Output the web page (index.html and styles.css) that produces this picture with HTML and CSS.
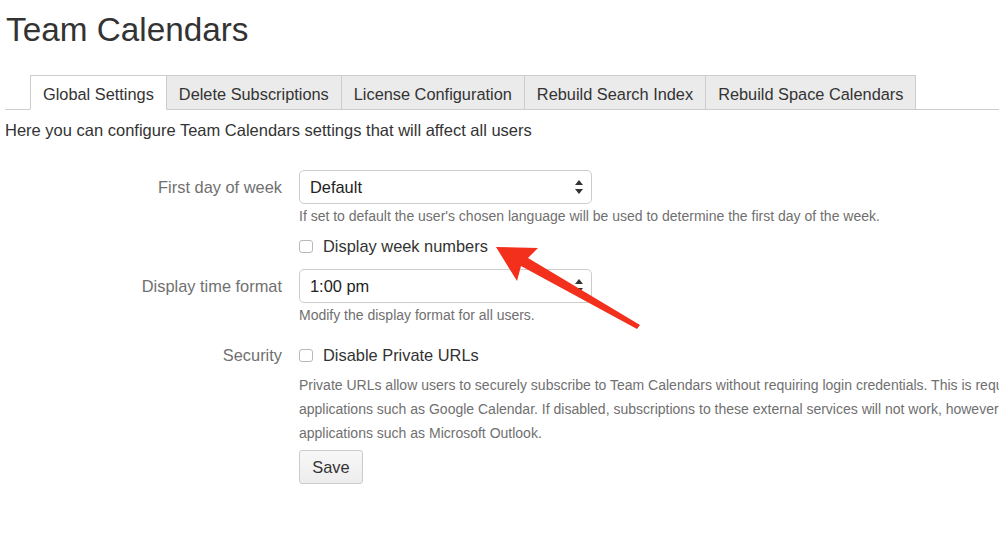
FILE: index.html
```html
<!DOCTYPE html>
<html>
<head>
<meta charset="utf-8">
<link rel="stylesheet" href="styles.css">
</head>
<body>
<div class="page">
  <h1 class="title">Team Calendars</h1>
  <ul class="tabs">
    <li class="tab active">Global Settings</li>
    <li class="tab">Delete Subscriptions</li>
    <li class="tab">License Configuration</li>
    <li class="tab">Rebuild Search Index</li>
    <li class="tab">Rebuild Space Calendars</li>
  </ul>
  <p class="intro">Here you can configure Team Calendars settings that will affect all users</p>

  <form class="form">
    <div class="field">
      <label class="label">First day of week</label>
      <div class="control">
        <div class="select"><span>Default</span><span class="arrows"></span></div>
        <div class="help">If set to default the user's chosen language will be used to determine the first day of the week.</div>
        <div class="check check-sub"><span class="box"></span><span>Display week numbers</span></div>
      </div>
    </div>

    <div class="field field-time">
      <label class="label">Display time format</label>
      <div class="control">
        <div class="select"><span>1:00 pm</span><span class="arrows"></span></div>
        <div class="help">Modify the display format for all users.</div>
      </div>
    </div>

    <div class="field field-security">
      <label class="label label-plain">Security</label>
      <div class="control">
        <div class="check"><span class="box"></span><span>Disable Private URLs</span></div>
        <div class="help help-long">Private URLs allow users to securely subscribe to Team Calendars without requiring login credentials. This is required for subscribing to calendars from external<br>applications such as Google Calendar. If disabled, subscriptions to these external services will not work, however subscriptions will still work in desktop<br>applications such as Microsoft Outlook.</div>
        <div class="buttons"><span class="button">Save</span></div>
      </div>
    </div>
  </form>

  <svg class="arrow" width="999" height="534" viewBox="0 0 999 534">
    <polygon points="496,247 538,248 528,258 640,325 637,329 521,266 517,281" fill="#f2301c"/>
  </svg>
</div>
</body>
</html>
```
FILE: styles.css
```css
html, body {
  margin: 0;
  padding: 0;
  overflow: hidden;
  background: #fff;
}
body {
  font-family: "Liberation Sans", Arial, sans-serif;
  color: #333;
  width: 999px;
  height: 534px;
}
.page {
  position: relative;
  height: 534px;
  padding-left: 5px;
  overflow: hidden;
}
.title {
  margin: 0;
  padding-top: 10px;
  padding-left: 1px;
  font-size: 33.3px;
  line-height: 40px;
  font-weight: normal;
  color: #333;
}
.tabs {
  list-style: none;
  margin: 25px 0 0 0;
  padding: 0 0 0 25px;
  display: flex;
  border-bottom: 1px solid #ccc;
  height: 34px;
}
.tab {
  box-sizing: border-box;
  height: 35px;
  padding: 8px 12px 6px 12px;
  font-size: 16.35px;
  line-height: 20px;
  background: #ebebeb;
  border: 1px solid #ccc;
  border-left: none;
  color: #333;
  white-space: nowrap;
}
.tab:first-child {
  border-left: 1px solid #ccc;
}
.tab.active {
  background: #fff;
  border-bottom-color: #fff;
}
.intro {
  margin: 10px 0 0 0;
  font-size: 16.5px;
  line-height: 20px;
  color: #333;
}
.form {
  margin-top: 30px;
}
.field {
  display: grid;
  grid-template-columns: 277px 1fr;
  column-gap: 17px;
}
.label {
  text-align: right;
  font-size: 16.4px;
  line-height: 34px;
  color: #707070;
}
.control {
  display: flex;
  flex-direction: column;
  align-items: flex-start;
  min-width: 0;
}
.select {
  box-sizing: border-box;
  width: 293px;
  height: 34px;
  border: 1px solid #ccc;
  border-radius: 5px;
  display: flex;
  align-items: center;
  justify-content: space-between;
  padding: 0 8px 0 10px;
  font-size: 16.4px;
  color: #222;
  background: #fff;
}
.arrows {
  width: 8px;
  height: 14px;
  position: relative;
}
.arrows::before, .arrows::after {
  content: "";
  position: absolute;
  left: 0;
  border-left: 4px solid transparent;
  border-right: 4px solid transparent;
}
.arrows::before {
  top: 0;
  border-bottom: 5px solid #333;
}
.arrows::after {
  bottom: 0;
  border-top: 5px solid #333;
}
.help {
  margin-top: 2px;
  font-size: 14px;
  line-height: 20px;
  color: #707070;
  white-space: nowrap;
}
.help-long {
  margin-top: 8px;
  line-height: 24px;
}
.check {
  display: flex;
  align-items: center;
  font-size: 16.4px;
  line-height: 20px;
  color: #333;
}
.check-sub {
  margin-top: 10px;
}
.box {
  box-sizing: border-box;
  width: 14px;
  height: 13px;
  border: 1px solid #b8b8b8;
  border-radius: 3px;
  background: #fff;
  margin-right: 10px;
}
.field-time {
  margin-top: 13px;
}
.field-security {
  margin-top: 20px;
}
.label-plain {
  line-height: 20px;
}
.buttons {
  margin-top: 5px;
}
.button {
  display: inline-block;
  box-sizing: border-box;
  width: 64px;
  height: 34px;
  line-height: 32px;
  text-align: center;
  border: 1px solid #ccc;
  border-radius: 3px;
  background: linear-gradient(#f7f7f7, #ededed);
  font-size: 16.4px;
  color: #333;
}
.arrow {
  position: absolute;
  left: 0;
  top: 0;
  pointer-events: none;
}
```
